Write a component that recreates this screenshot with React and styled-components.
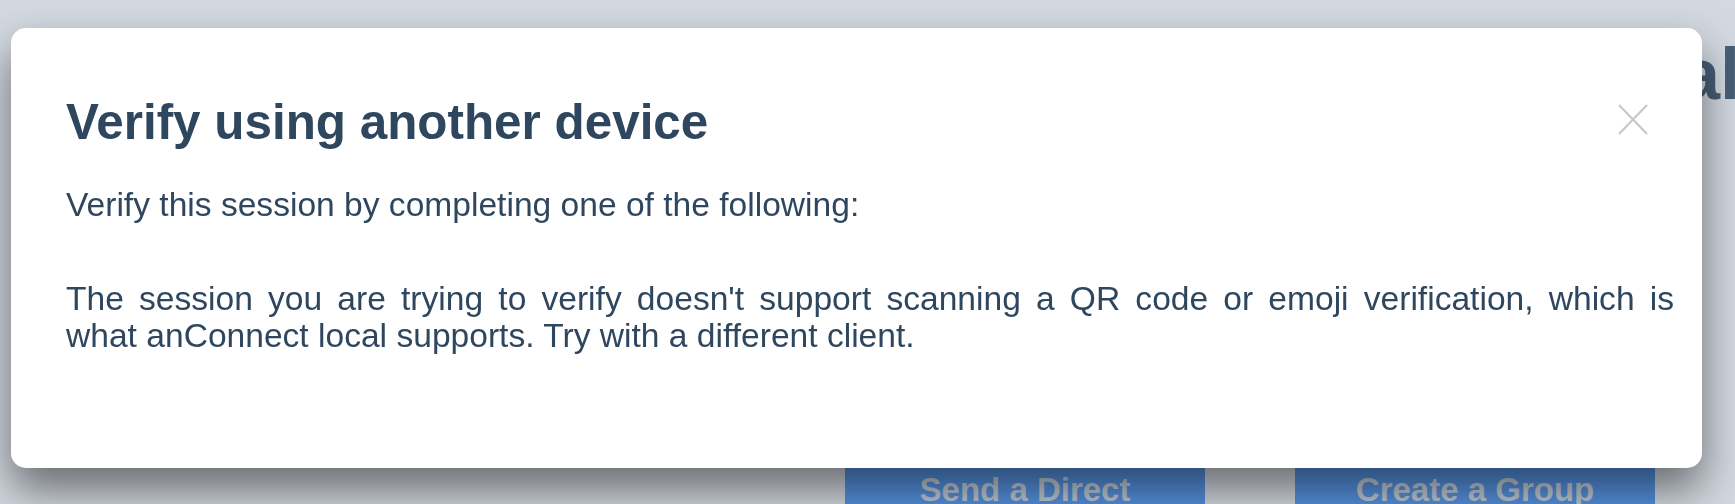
import React from "react";
import styled, { createGlobalStyle } from "styled-components";

const Global = createGlobalStyle`
  html, body {
    margin: 0;
    padding: 0;
    height: 100%;
    overflow: hidden;
  }
  body {
    background: #d3d9e0;
    font-family: "Liberation Sans", Arial, Helvetica, sans-serif;
  }
`;

const Page = styled.div`
  display: flex;
  flex-direction: column;
  padding-top: 38px;
  height: 504px;
  box-sizing: border-box;
  overflow: hidden;
`;

const PageHeading = styled.h1`
  margin: 0 -5px 0 0;
  font-size: 72px;
  line-height: 72px;
  font-weight: 700;
  color: #475f77;
  white-space: nowrap;
  align-self: flex-end;
`;

const ButtonRow = styled.div`
  display: flex;
  justify-content: flex-end;
  gap: 90px;
  padding-right: 80px;
  margin-top: 340px;
`;

const ActionButton = styled.button`
  flex: none;
  width: 360px;
  height: 80px;
  border: none;
  border-radius: 0;
  background: #5592e0;
  color: #c0cad4;
  font-family: "Liberation Sans", Arial, sans-serif;
  font-weight: 700;
  font-size: 33px;
  padding: 0;
`;

const Overlay = styled.div`
  position: fixed;
  inset: 0;
  display: flex;
  align-items: flex-start;
  padding: 28px 0 0 11px;
`;

const Modal = styled.div`
  position: relative;
  width: 1691px;
  box-sizing: border-box;
  background: #ffffff;
  border-radius: 15px;
  padding: 64px 28px 114px 55px;
  box-shadow: 0 22px 44px rgba(0, 0, 0, 0.5);
  color: #2e475f;
`;

const Title = styled.h2`
  margin: 0 0 34px;
  font-size: 49.4px;
  line-height: 60px;
  font-weight: 700;
  color: #2e475f;
`;

const Text = styled.p`
  margin: 0 0 ${(p) => p.$gap || 0}px;
  font-size: 33.6px;
  line-height: 37px;
  font-weight: 400;
  color: #2e475f;
  text-align: ${(p) => (p.$justify ? "justify" : "left")};
`;

const CloseButton = styled.button`
  position: absolute;
  top: 76px;
  right: 54px;
  width: 30px;
  height: 31px;
  padding: 0;
  border: none;
  background: transparent;
  display: flex;
  cursor: pointer;
`;

const CloseIcon = () => (
  <svg width="30" height="31" viewBox="0 0 30 31" fill="none">
    <path d="M1 1 L29 30 M29 1 L1 30" stroke="#c8c8c8" strokeWidth="2.2" />
  </svg>
);

export default function App() {
  return (
    <>
      <Global />
      <Page>
        <PageHeading>Welcome to anConnect local</PageHeading>
        <ButtonRow>
          <ActionButton>Send a Direct</ActionButton>
          <ActionButton>Create a Group</ActionButton>
        </ButtonRow>
      </Page>
      <Overlay>
        <Modal>
          <CloseButton aria-label="Close">
            <CloseIcon />
          </CloseButton>
          <Title>Verify using another device</Title>
          <Text $gap={57}>Verify this session by completing one of the following:</Text>
          <Text $justify>
            The session you are trying to verify doesn't support scanning a QR code or emoji
            verification, which is what{"\u00a0"}anConnect local supports. Try with a different
            client.
          </Text>
        </Modal>
      </Overlay>
    </>
  );
}
